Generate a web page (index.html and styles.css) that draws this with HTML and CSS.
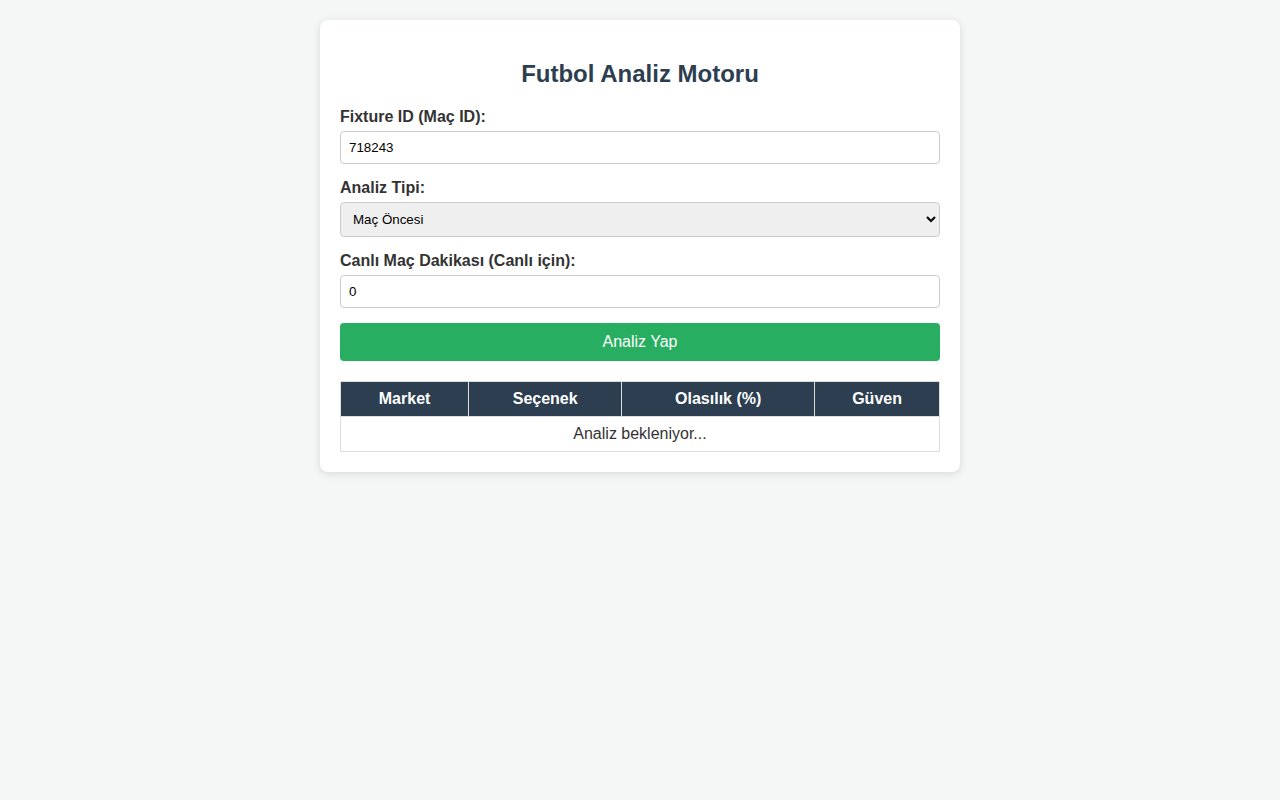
FILE: index.html
```html
<!DOCTYPE html>
<html lang="tr">
<head>
<meta charset="UTF-8">
<title>Futbol Analiz Motoru</title>
<link rel="stylesheet" href="styles.css">
</head>
<body>
<div class="container">
  <h1>Futbol Analiz Motoru</h1>
  <div class="form-group">
    <label for="fixture">Fixture ID (Maç ID):</label>
    <input type="text" id="fixture" value="718243">
  </div>
  <div class="form-group">
    <label for="tip">Analiz Tipi:</label>
    <select id="tip">
      <option>Maç Öncesi</option>
      <option>Canlı</option>
    </select>
  </div>
  <div class="form-group">
    <label for="dakika">Canlı Maç Dakikası (Canlı için):</label>
    <input type="number" id="dakika" value="0">
  </div>
  <button class="btn">Analiz Yap</button>
  <table class="results">
    <thead>
      <tr><th>Market</th><th>Seçenek</th><th>Olasılık (%)</th><th>Güven</th></tr>
    </thead>
    <tbody>
      <tr><td colspan="4">Analiz bekleniyor...</td></tr>
    </tbody>
  </table>
</div>
</body>
</html>
```
FILE: styles.css
```css
body {
  margin: 0;
  padding: 20px;
  background: #f4f7f6;
  font-family: "Liberation Sans", Arial, sans-serif;
  color: #333;
}
.container {
  max-width: 600px;
  margin: 0 auto;
  background: #fff;
  padding: 20px;
  border-radius: 8px;
  box-shadow: 0 2px 8px rgba(0,0,0,0.12);
}
h1 {
  text-align: center;
  color: #2c3e50;
  font-size: 24px;
  margin: 20px 0;
}
.form-group {
  margin-bottom: 15px;
}
label {
  display: block;
  font-weight: bold;
  margin-bottom: 5px;
  font-size: 16px;
}
input, select {
  width: 100%;
  box-sizing: border-box;
  padding: 8px;
  border: 1px solid #ccc;
  border-radius: 4px;
  font-family: "Liberation Sans", Arial, sans-serif;
  font-size: 13.33px;
}
.btn {
  width: 100%;
  padding: 10px;
  background: #27ae60;
  color: #fff;
  border: none;
  border-radius: 4px;
  font-size: 16px;
  font-family: "Liberation Sans", Arial, sans-serif;
  cursor: pointer;
}
.results {
  width: 100%;
  border-collapse: collapse;
  margin-top: 20px;
}
.results th, .results td {
  border: 1px solid #ddd;
  padding: 8px;
  text-align: center;
  font-size: 16px;
}
.results th {
  background: #2c3e50;
  color: #fff;
}
```
